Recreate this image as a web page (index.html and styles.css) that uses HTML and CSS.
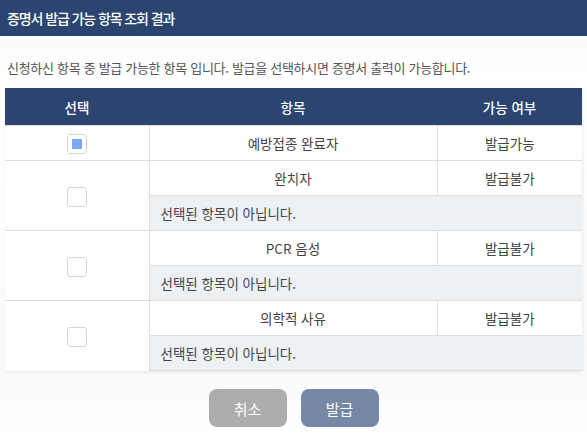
FILE: index.html
```html
<!DOCTYPE html>
<html lang="ko">
<head>
    <meta charset="UTF-8">
    <meta name="viewport" content="width=device-width, initial-scale=1.0">
    <title>증명서 발급 가능 항목 조회 결과</title>
    <link rel="stylesheet" href="styles.css">
</head>
<body>
    <div class="popHead">증명서 발급 가능 항목 조회 결과</div>
    <div class="popBody">
        <p class="desc">신청하신 항목 중 발급 가능한 항목 입니다. 발급을 선택하시면 증명서 출력이 가능합니다.</p>
        <table class="resultTable">
            <colgroup>
                <col class="colCheck">
                <col class="colName">
                <col class="colState">
            </colgroup>
            <thead>
                <tr>
                    <th>선택</th>
                    <th>항목</th>
                    <th>가능 여부</th>
                </tr>
            </thead>
            <tbody>
                <tr>
                    <td class="check"><span class="chk on"></span></td>
                    <td>예방접종 완료자</td>
                    <td>발급가능</td>
                </tr>
                <tr>
                    <td class="check" rowspan="2"><span class="chk"></span></td>
                    <td>완치자</td>
                    <td>발급불가</td>
                </tr>
                <tr>
                    <td class="msg" colspan="2">선택된 항목이 아닙니다.</td>
                </tr>
                <tr>
                    <td class="check" rowspan="2"><span class="chk"></span></td>
                    <td>PCR 음성</td>
                    <td>발급불가</td>
                </tr>
                <tr>
                    <td class="msg" colspan="2">선택된 항목이 아닙니다.</td>
                </tr>
                <tr>
                    <td class="check" rowspan="2"><span class="chk"></span></td>
                    <td>의학적 사유</td>
                    <td>발급불가</td>
                </tr>
                <tr>
                    <td class="msg" colspan="2">선택된 항목이 아닙니다.</td>
                </tr>
            </tbody>
        </table>
        <div class="btnArea">
            <button class="btn btnCancel">취소</button>
            <button class="btn btnIssue">발급</button>
        </div>
    </div>
</body>
</html>
```
FILE: styles.css
```css
body {
    margin: 0;
    font-family: "Noto Sans CJK KR", "Noto Sans", sans-serif;
    color: #444;
    background: #fff;
}
.popHead {
    height: 36px;
    line-height: 36px;
    padding: 0 7px;
    background-color: #2b4470;
    color: #fff;
    font-size: 14px;
    font-weight: 500;
    letter-spacing: -1.1px;
}
.popBody {
    padding: 22px 5px 0;
    background: linear-gradient(to bottom, #fbfbfc 0, #fff 40px, #fafafb 340px, #fff 400px);
}
.desc {
    margin: 0 0 10px 2px;
    font-size: 13px;
    line-height: 20px;
    letter-spacing: -0.3px;
    color: #555;
}
.resultTable {
    width: 577px;
    border-collapse: collapse;
    table-layout: fixed;
    background-color: #fff;
    box-shadow: 1px 1px 3px rgba(0, 0, 0, 0.08);
    font-size: 13.5px;
}
.colCheck {
    width: 144px;
}
.colState {
    width: 145px;
}
.resultTable th {
    height: 37px;
    padding: 0;
    background-color: #2b4470;
    color: #fff;
    font-weight: 500;
    font-size: 13.5px;
}
.resultTable td {
    height: 34px;
    padding: 0;
    text-align: center;
    border-top: 1px solid #dedede;
    border-left: 1px solid #dedede;
}
.resultTable td:first-child {
    border-left: 0;
}
.resultTable tbody tr:last-child td {
    border-bottom: 1px solid #dedede;
}
.resultTable td.msg {
    text-align: left;
    padding-left: 11px;
    background-color: #eef1f4;
    border-left: 1px solid #dedede;
}
.chk {
    display: inline-block;
    width: 18px;
    height: 18px;
    border: 1px solid #d6d6d6;
    border-radius: 3px;
    background-color: #fff;
    vertical-align: middle;
    position: relative;
}
.chk.on::after {
    content: "";
    position: absolute;
    left: 4px;
    top: 4px;
    width: 10px;
    height: 10px;
    background-color: #7aa8f6;
}
.btnArea {
    display: flex;
    justify-content: center;
    gap: 14px;
    padding: 18px 0 11px;
}
.btn {
    width: 78px;
    height: 38px;
    border: 0;
    border-radius: 8px;
    color: #fff;
    font-family: inherit;
    font-size: 15px;
}
.btnCancel {
    background-color: #adadad;
}
.btnIssue {
    background-color: #7589a6;
}
```
